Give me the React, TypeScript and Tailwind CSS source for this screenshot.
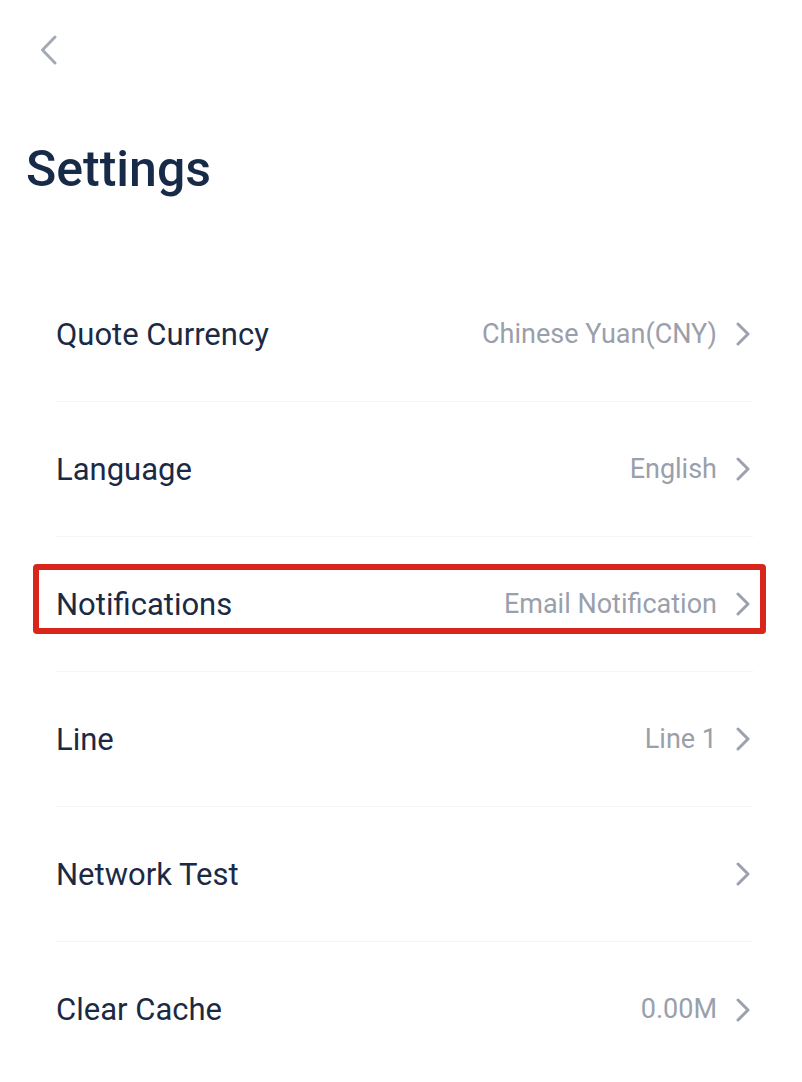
import React from 'react';

type Row = {
  label: string;
  value?: string;
  highlight?: boolean;
};

const ROWS: Row[] = [
  { label: 'Quote Currency', value: 'Chinese Yuan(CNY)' },
  { label: 'Language', value: 'English' },
  { label: 'Notifications', value: 'Email Notification', highlight: true },
  { label: 'Line', value: 'Line 1' },
  { label: 'Network Test' },
  { label: 'Clear Cache', value: '0.00M' },
];

function Chevron({ className = '' }: { className?: string }) {
  return (
    <svg width="14" height="24" viewBox="0 0 14 24" fill="none" aria-hidden="true" className={className}>
      <path d="M2 2l10 10L2 22" stroke="currentColor" strokeWidth="3" strokeLinecap="round" strokeLinejoin="round" />
    </svg>
  );
}

export default function App() {
  return (
    <div className="min-h-[1082px] w-full bg-white font-['Roboto','Liberation_Sans',sans-serif]">
      <div className="pl-[40px] pt-[35px]">
        <button type="button" className="block text-[#a4aab5]" aria-label="Back">
          <svg width="17" height="30" viewBox="0 0 17 30" fill="none" className="block">
            <path d="M15 2L2.5 15 15 28" stroke="currentColor" strokeWidth="3" strokeLinecap="round" strokeLinejoin="round" />
          </svg>
        </button>
      </div>

      <h1 className="mt-[79px] pl-[26px] text-[50px] font-medium leading-none text-[#172b48]">Settings</h1>

      <ul className="mt-[73px] pl-[56px] pr-[49px]">
        {ROWS.map(row => (
          <li
            key={row.label}
            className="relative flex h-[135px] items-center justify-between border-b border-[#f3f4f6] last:border-b-0"
          >
            <span className="text-[31px] leading-none text-[#1b2a44]">{row.label}</span>
            <span className="flex items-center gap-[19px] text-[#9aa0ab]">
              {row.value && <span className="text-[27px] leading-none">{row.value}</span>}
              <Chevron className="mr-[3px] text-[#9ca2ad]" />
            </span>
            {row.highlight && (
              <div className="pointer-events-none absolute left-[-23px] right-[-13px] top-[27px] h-[70px] rounded-[4px] border-[6px] border-[#d8261b]" />
            )}
          </li>
        ))}
      </ul>
    </div>
  );
}
